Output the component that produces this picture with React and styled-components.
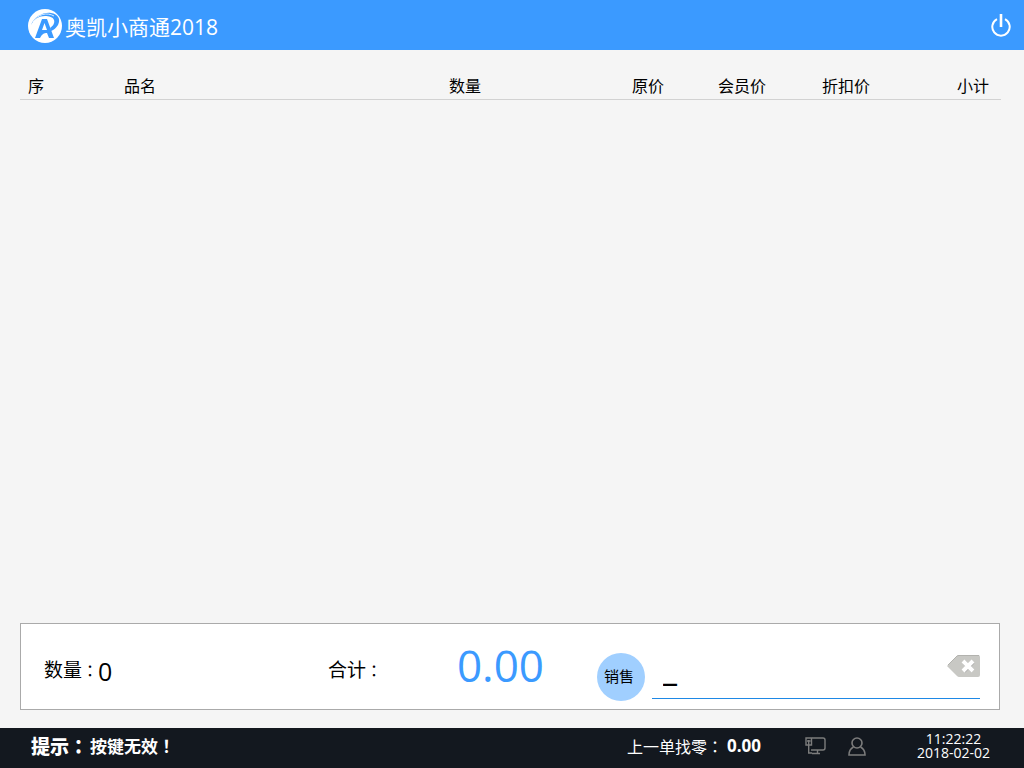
import { useState } from "react";
import styled, { createGlobalStyle } from "styled-components";

const COLUMNS = [
  { name: "序", width: "96px" },
  { name: "品名" },
  { name: "数量", width: "120px", align: "right" },
  { name: "原价", width: "183px", align: "right" },
  { name: "会员价", width: "102px", align: "right" },
  { name: "折扣价", width: "104px", align: "right" },
  { name: "小计", width: "119px", align: "right" },
];

export default function App() {
  const [code, setCode] = useState("_");

  return (
    <>
      <GlobalStyle />
      <SCPage>
        <SCHeader>
          <SCBrand>
            <Logo />
            <h1>奥凯小商通2018</h1>
          </SCBrand>
          <SCIconButton type="button" aria-label="退出">
            <PowerIcon />
          </SCIconButton>
        </SCHeader>

        <SCMain>
          <SCTable>
            <thead>
              <tr>
                {COLUMNS.map((column) => (
                  <SCColumn key={column.name} scope="col" $width={column.width} $align={column.align}>
                    {column.name}
                  </SCColumn>
                ))}
              </tr>
            </thead>
            <tbody />
          </SCTable>
        </SCMain>

        <SCCheckout>
          <SCCount>
            <SCLabel>数量<SCPunct>：</SCPunct></SCLabel>
            <strong>0</strong>
          </SCCount>
          <SCLabel>合计<SCPunct>：</SCPunct></SCLabel>
          <SCTotal>0.00</SCTotal>
          <SCSaleButton type="button">销售</SCSaleButton>
          <SCEntry>
            <input
              aria-label="商品条码"
              value={code}
              onChange={(e) => setCode(e.target.value)}
            />
            <SCIconButton type="button" aria-label="删除" onClick={() => setCode("")}>
              <DeleteIcon />
            </SCIconButton>
          </SCEntry>
        </SCCheckout>

        <SCFooter>
          <SCHint>
            <b>提示<SCPunct>：</SCPunct></b>
            <span>按键无效<SCPunct>！</SCPunct></span>
          </SCHint>
          <SCChange>
            <span>上一单找零<SCPunct>：</SCPunct></span>
            <b>0.00</b>
          </SCChange>
          <SCStatusIcons>
            <NetworkIcon />
            <UserIcon />
          </SCStatusIcons>
          <SCClock>
            <time>11:22:22</time>
            <time>2018-02-02</time>
          </SCClock>
        </SCFooter>
      </SCPage>
    </>
  );
}

function Logo() {
  return (
    <svg width="36" height="36" viewBox="0 0 36 36" aria-hidden="true">
      <circle cx="18" cy="18" r="17" fill="#fff" />
      <path d="M4 17C7 9 16 4 24 5C31 6 34 11 31 17C29 20 27 22 24 23L23 20C26 18 28 15 27 12C26 9 22 8 18 8C12 8 7 11 4 17Z" fill="#3b9aff" />
      <path d="M6 14C11 6 20 4 27 8" fill="none" stroke="#fff" strokeWidth="0.8" />
      <path d="M15 11H20L27 30H22L20 25C17 25 15 26 13 30H8ZM17.5 15L15 22H20Z" fill="#3b9aff" fillRule="evenodd" />
    </svg>
  );
}

function PowerIcon() {
  return (
    <svg width="20" height="24" viewBox="0 0 20 24" fill="none" stroke="#fff" strokeWidth="2">
      <path d="M6 5.2A8.7 8.7 0 1 0 14 5.2" />
      <path d="M10 0V13" strokeWidth="2.6" />
    </svg>
  );
}

function DeleteIcon() {
  return (
    <svg width="33" height="22" viewBox="0 0 33 22">
      <path d="M0 11L10 1Q11 0 12 0H31Q33 0 33 2V20Q33 22 31 22H12Q11 22 10 21Z" fill="#c8c8c4" />
      <path d="M1 10L10 1Q11 .5 12 .5H32" fill="none" stroke="#b2b2ae" />
      <path d="M17 7L26 16M26 7L17 16" stroke="#aaa" strokeWidth="4" />
      <path d="M16 6L26 16M26 6L16 16" stroke="#fff" strokeWidth="4" />
    </svg>
  );
}

function NetworkIcon() {
  return (
    <svg width="21" height="18" viewBox="0 0 21 18" fill="none" stroke="#7c7c7c" strokeWidth="1.4">
      <path d="M7 1H18Q20 1 20 3V11Q20 13 18 13H6" />
      <path d="M1 1H6.5V8H1ZM2 4H5.5M3.7 3V16H7M12.5 13V16M7 16.5H15" />
    </svg>
  );
}

function UserIcon() {
  return (
    <svg width="18" height="19" viewBox="0 0 18 19" fill="none" stroke="#7c7c7c" strokeWidth="1.6">
      <circle cx="9" cy="6" r="5" />
      <path d="M5.5 10C2.5 11.5 1 14 1 18H17C17 14 15.5 11.5 12.5 10" />
    </svg>
  );
}

const GlobalStyle = createGlobalStyle`
  * {
    box-sizing: border-box;
  }

  body {
    margin: 0;
    background-color: #f5f5f5;
    color: #000;
    font-family: "Open Sans", "Noto Sans CJK SC", sans-serif;
    font-size: 16px;
  }

  button, input {
    font-family: inherit;
    color: inherit;
  }

  svg {
    display: block;
  }
`;

const SCPage = styled.div`
  min-height: 100vh;
  display: flex;
  flex-direction: column;
`;

const SCHeader = styled.header`
  height: 50px;
  padding: 2px 13px 0 27px;
  background-color: #3b9aff;
  color: #fff;
  display: flex;
  justify-content: space-between;
  align-items: center;
`;

const SCBrand = styled.div`
  display: flex;
  align-items: center;
  gap: 2px;

  h1 {
    margin: 0;
    padding-top: 2px;
    font-size: 21px;
    font-weight: 400;
    line-height: 28px;
  }
`;

const SCIconButton = styled.button`
  padding: 0;
  border: 0;
  background: none;
  cursor: pointer;
`;

const SCMain = styled.main`
  flex: 1;
  padding: 24px 23px 0 20px;
`;

const SCTable = styled.table`
  width: 100%;
  table-layout: fixed;
  border-collapse: collapse;
`;

const SCColumn = styled.th`
  width: ${({ $width }) => $width || "auto"};
  padding: 0 12px 0 8px;
  border-bottom: 1px solid #d2d2d2;
  font-weight: 400;
  line-height: 25px;
  text-align: ${({ $align }) => $align || "left"};
`;

const SCCheckout = styled.section`
  height: 87px;
  margin: 0 24px 18px 20px;
  padding: 0 19px 0 23px;
  border: 1px solid #aaa;
  background-color: #fff;
  display: flex;
  align-items: center;
`;

/* full-width marks sit in the middle of their cell */
const SCPunct = styled.span`
  font-family: "Noto Sans CJK TC", sans-serif;
`;

const SCLabel = styled.span`
  padding-top: 6px;
  font-size: 19px;
  line-height: 28px;

  ${SCPunct} {
    font-size: 16px;
  }
`;

const SCCount = styled.div`
  flex: 1;
  display: flex;
  align-items: center;

  strong {
    padding-top: 8px;
    font-size: 25px;
    font-weight: 400;
    line-height: 28px;
  }
`;

const SCTotal = styled.output`
  width: 215px;
  padding: 0 53px 4px 0;
  color: #3b9aff;
  font-size: 44px;
  line-height: 60px;
  text-align: right;
`;

const SCSaleButton = styled.button`
  width: 48px;
  height: 48px;
  margin-top: 20px;
  padding: 0 4px 2px 0;
  border: 0;
  border-radius: 50%;
  background-color: #a0cfff;
  font-size: 15px;
  cursor: pointer;
`;

const SCEntry = styled.div`
  width: 328px;
  height: 64px;
  margin-left: 7px;
  border-bottom: 1px solid #1e88e5;
  display: flex;
  align-items: center;

  input {
    flex: 1;
    min-width: 0;
    height: 48px;
    padding: 4px 11px 0;
    border: 0;
    outline: 0;
    background: none;
    font-size: 34px;
    font-weight: 700;
  }
`;

const SCFooter = styled.footer`
  height: 40px;
  padding: 0 32px 4px 31px;
  background-color: #13181f;
  color: #fff;
  display: flex;
  align-items: center;
`;

const SCHint = styled.div`
  flex: 1;
  display: flex;
  align-items: center;
  gap: 2px;
  font-size: 17px;
  font-weight: 700;
  line-height: 28px;

  b {
    font-size: 19px;
  }
`;

const SCChange = styled.div`
  display: flex;
  align-items: center;
  gap: 4px;
  line-height: 28px;

  b {
    font-size: 17px;
  }
`;

const SCStatusIcons = styled.div`
  margin: 0 49px 0 44px;
  display: flex;
  align-items: center;
  gap: 22px;
`;

const SCClock = styled.div`
  width: 77px;
  display: flex;
  flex-direction: column;
  align-items: center;
  font-size: 14px;
  line-height: 14px;
`;
